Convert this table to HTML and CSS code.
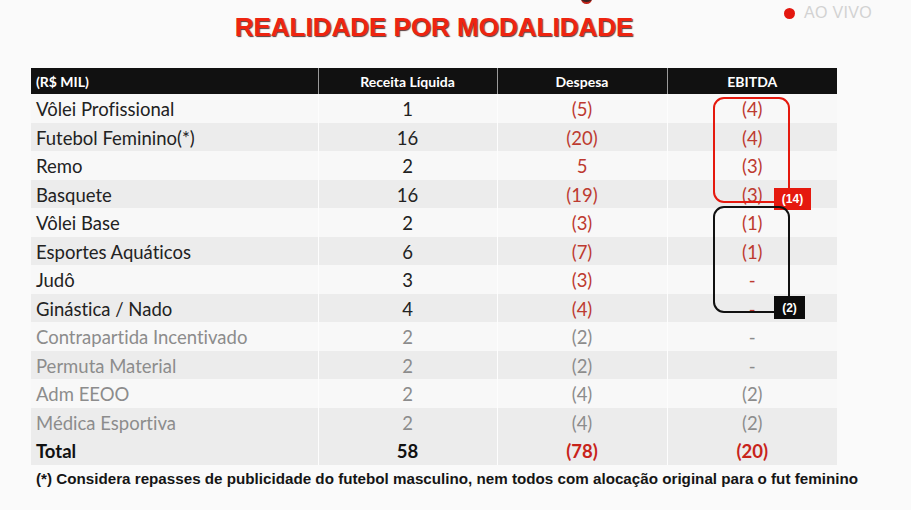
FILE: index.html
```html
<!DOCTYPE html>
<html lang="pt-BR">
<head>
<meta charset="utf-8">
<link rel="stylesheet" href="styles.css">
</head>
<body>
<div class="page">
  <div class="crest"></div>
  <div class="live"><span class="live-dot"></span><span class="live-text">AO VIVO</span></div>
  <div class="slide">
    <h1 class="title">REALIDADE POR MODALIDADE</h1>
    <div class="table-wrap">
      <table class="data">
        <colgroup>
          <col class="c1"><col class="c2"><col class="c3"><col class="c4">
        </colgroup>
        <thead>
          <tr><th class="first">(R$ MIL)</th><th>Receita Líquida</th><th>Despesa</th><th>EBITDA</th></tr>
        </thead>
        <tbody>
          <tr><td class="first">Vôlei Profissional</td><td>1</td><td class="neg">(5)</td><td class="neg">(4)</td></tr>
          <tr class="alt"><td class="first">Futebol Feminino(*)</td><td>16</td><td class="neg">(20)</td><td class="neg">(4)</td></tr>
          <tr><td class="first">Remo</td><td>2</td><td class="neg">5</td><td class="neg">(3)</td></tr>
          <tr class="alt"><td class="first">Basquete</td><td>16</td><td class="neg">(19)</td><td class="neg">(3)</td></tr>
          <tr><td class="first">Vôlei Base</td><td>2</td><td class="neg">(3)</td><td class="neg">(1)</td></tr>
          <tr class="alt"><td class="first">Esportes Aquáticos</td><td>6</td><td class="neg">(7)</td><td class="neg">(1)</td></tr>
          <tr><td class="first">Judô</td><td>3</td><td class="neg">(3)</td><td class="neg">-</td></tr>
          <tr class="alt"><td class="first">Ginástica / Nado</td><td>4</td><td class="neg">(4)</td><td class="neg">-</td></tr>
          <tr class="muted"><td class="first">Contrapartida Incentivado</td><td>2</td><td>(2)</td><td>-</td></tr>
          <tr class="muted alt"><td class="first">Permuta Material</td><td>2</td><td>(2)</td><td>-</td></tr>
          <tr class="muted"><td class="first">Adm EEOO</td><td>2</td><td>(4)</td><td>(2)</td></tr>
          <tr class="muted alt"><td class="first">Médica Esportiva</td><td>2</td><td>(4)</td><td>(2)</td></tr>
          <tr class="total alt"><td class="first">Total</td><td>58</td><td class="neg">(78)</td><td class="neg">(20)</td></tr>
        </tbody>
      </table>
      <div class="callout callout-red"><span class="tag tag-red">(14)</span></div>
      <div class="callout callout-black"><span class="tag tag-black">(2)</span></div>
    </div>
    <p class="note">(*) Considera repasses de publicidade do futebol masculino, nem todos com alocação original para o fut feminino</p>
  </div>
</div>
</body>
</html>
```

FILE: styles.css
```css
* { box-sizing: border-box; }
html, body { margin: 0; padding: 0; }
body {
  background: #fafafa;
  width: 911px;
  height: 510px;
  overflow: hidden;
}
.page {
  position: relative;
  width: 911px;
  height: 510px;
}
.crest {
  position: absolute;
  left: 581px;
  top: -6px;
  width: 11px;
  height: 10px;
  border-radius: 0 0 6px 6px;
  background: #3a2222;
  border-bottom: 2px solid #c0241a;
}
.live {
  position: absolute;
  left: 784px;
  top: 4px;
  display: flex;
  align-items: center;
  gap: 9px;
}
.live-dot {
  width: 11px;
  height: 11px;
  border-radius: 50%;
  background: #e3170f;
}
.live-text {
  font-family: "Liberation Sans", Arial, sans-serif;
  font-size: 16px;
  color: #d2d2d2;
  letter-spacing: 0.3px;
}
.slide {
  margin-left: 31px;
  width: 806px;
}
.title {
  margin: 0 0 26px 0;
  padding-top: 12px;
  height: 42px;
  line-height: 30px;
  text-align: center;
  font-family: "Liberation Sans", Arial, sans-serif;
  font-weight: bold;
  font-size: 26px;
  color: #ee2410;
  text-shadow: 1px 1px 1px #5a3a3a;
}
.table-wrap {
  position: relative;
}
.data {
  width: 806px;
  border-collapse: collapse;
  table-layout: fixed;
  font-family: Lato, "Open Sans", sans-serif;
  font-variant-ligatures: none;
}
.c1 { width: 287px; }
.c2 { width: 179px; }
.c3 { width: 170px; }
.c4 { width: 170px; }
.data th {
  height: 26px;
  padding: 0;
  background: #111;
  color: #fff;
  font-size: 14px;
  font-weight: bold;
  text-align: center;
  border-left: 1px solid #9a9a9a;
}
.data th.first {
  text-align: left;
  padding-left: 5px;
  border-left: none;
}
.data td {
  height: 28.5px;
  padding: 2px 0 0 0;
  font-size: 18.5px;
  color: #222;
  text-align: center;
  border-left: 1px solid #fdfdfd;
  background: #f8f8f8;
}
.data td.first {
  text-align: left;
  padding-left: 5px;
  border-left: none;
}
.data tr.alt td { background: #ececec; }
.data td.neg { color: #bd3a30; }
.data tr.muted td { color: #8c8c8c; }
.data tr.total td { font-weight: bold; color: #111; }
.data tr.total td.neg { color: #c8231a; }
.callout {
  position: absolute;
  left: 682px;
  width: 77px;
  border-radius: 11px;
  border: 2px solid;
}
.callout-red {
  top: 29px;
  height: 106px;
  border-color: #e5190e;
}
.callout-black {
  top: 138px;
  height: 107px;
  border-color: #111;
}
.tag {
  position: absolute;
  right: -23px;
  font-family: "Liberation Sans", Arial, sans-serif;
  font-weight: bold;
  font-size: 12px;
  color: #fff;
  display: flex;
  align-items: center;
  justify-content: center;
}
.tag-red {
  bottom: -9px;
  width: 37px;
  height: 22px;
  background: #e5190e;
}
.tag-black {
  bottom: -8px;
  width: 31px;
  height: 23px;
  right: -17px;
  background: #0c0c0c;
}
.note {
  margin: 5px 0 0 5px;
  font-family: "Liberation Sans", Arial, sans-serif;
  font-weight: bold;
  font-size: 15.2px;
  color: #151515;
  white-space: nowrap;
}
```
